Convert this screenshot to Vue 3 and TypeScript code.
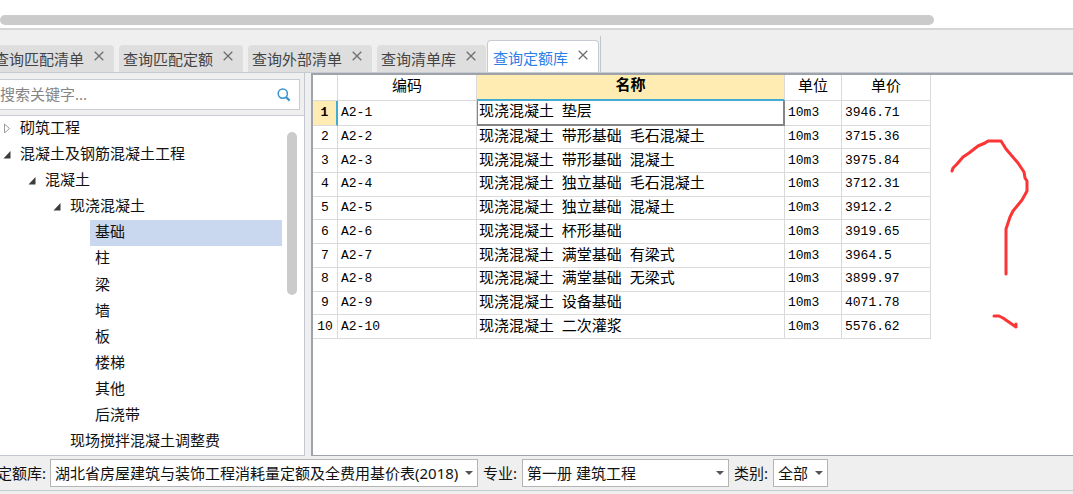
<script setup lang="ts">
import { ref } from 'vue'

interface Tab { id: string; label: string }
interface TreeNode { label: string; level: number; state: 'open' | 'closed' | 'leaf' }
interface Row { code: string; name: string; unit: string; price: string }

const tabs: Tab[] = [
  { id: 'matchList', label: '查询匹配清单' },
  { id: 'matchQuota', label: '查询匹配定额' },
  { id: 'external', label: '查询外部清单' },
  { id: 'listLib', label: '查询清单库' },
  { id: 'quotaLib', label: '查询定额库' },
]
const activeTab = ref('quotaLib')

const nodes: TreeNode[] = [
  { label: '砌筑工程', level: 0, state: 'closed' },
  { label: '混凝土及钢筋混凝土工程', level: 0, state: 'open' },
  { label: '混凝土', level: 1, state: 'open' },
  { label: '现浇混凝土', level: 2, state: 'open' },
  { label: '基础', level: 3, state: 'leaf' },
  { label: '柱', level: 3, state: 'leaf' },
  { label: '梁', level: 3, state: 'leaf' },
  { label: '墙', level: 3, state: 'leaf' },
  { label: '板', level: 3, state: 'leaf' },
  { label: '楼梯', level: 3, state: 'leaf' },
  { label: '其他', level: 3, state: 'leaf' },
  { label: '后浇带', level: 3, state: 'leaf' },
  { label: '现场搅拌混凝土调整费', level: 2, state: 'leaf' },
]
const selectedNode = ref('基础')

const rows: Row[] = [
  { code: 'A2-1', name: '现浇混凝土 垫层', unit: '10m3', price: '3946.71' },
  { code: 'A2-2', name: '现浇混凝土 带形基础 毛石混凝土', unit: '10m3', price: '3715.36' },
  { code: 'A2-3', name: '现浇混凝土 带形基础 混凝土', unit: '10m3', price: '3975.84' },
  { code: 'A2-4', name: '现浇混凝土 独立基础 毛石混凝土', unit: '10m3', price: '3712.31' },
  { code: 'A2-5', name: '现浇混凝土 独立基础 混凝土', unit: '10m3', price: '3912.2' },
  { code: 'A2-6', name: '现浇混凝土 杯形基础', unit: '10m3', price: '3919.65' },
  { code: 'A2-7', name: '现浇混凝土 满堂基础 有梁式', unit: '10m3', price: '3964.5' },
  { code: 'A2-8', name: '现浇混凝土 满堂基础 无梁式', unit: '10m3', price: '3899.97' },
  { code: 'A2-9', name: '现浇混凝土 设备基础', unit: '10m3', price: '4071.78' },
  { code: 'A2-10', name: '现浇混凝土 二次灌浆', unit: '10m3', price: '5576.62' },
]
const selectedRow = ref(0)
const keyword = ref('')
</script>

<template>
  <div class="app">
    <div class="upper"><div class="hbar"></div></div>

    <nav class="tabs">
      <div v-for="t in tabs" :key="t.id" class="tab" :class="{ active: t.id === activeTab }">
        <button class="tab-label" type="button" @click="activeTab = t.id">{{ t.label }}</button>
        <button class="tab-close" type="button" :aria-label="'关闭' + t.label">
          <svg viewBox="0 0 10 10"><path d="M0.7 0.7L9.3 9.3M9.3 0.7L0.7 9.3" /></svg>
        </button>
      </div>
      <div class="tab-end"></div>
    </nav>

    <main class="main">
      <aside class="sidebar">
        <div class="search">
          <input v-model="keyword" type="text" aria-label="搜索关键字" placeholder="搜索关键字..." />
          <button type="button" aria-label="搜索">
            <svg viewBox="0 0 14 14"><circle cx="5.8" cy="5.6" r="4.6" /><path class="handle" d="M9.2 9.2L12.6 12.6" /></svg>
          </button>
        </div>
        <div class="tree">
          <ul>
            <li v-for="n in nodes" :key="n.label" :class="'level-' + n.level">
              <svg v-if="n.state === 'closed'" class="arrow" viewBox="0 0 8 10"><path class="hollow" d="M1.5 1L6.5 5.5L1.5 10Z" /></svg>
              <svg v-else-if="n.state === 'open'" class="arrow" viewBox="0 0 8 10"><path class="solid" d="M7.5 2V9.5H0.5Z" /></svg>
              <span v-else class="arrow"></span>
              <button type="button" :class="{ selected: n.label === selectedNode }" @click="selectedNode = n.label">{{ n.label }}</button>
            </li>
          </ul>
          <div class="vbar"></div>
        </div>
      </aside>

      <section class="panel">
        <table>
          <colgroup>
            <col class="c-num" /><col class="c-code" /><col class="c-name" /><col class="c-unit" /><col class="c-price" />
          </colgroup>
          <thead>
            <tr><th></th><th>编码</th><th class="current">名称</th><th>单位</th><th>单价</th></tr>
          </thead>
          <tbody>
            <tr v-for="(r, i) in rows" :key="r.code" :class="{ chosen: i === selectedRow }" @click="selectedRow = i">
              <th scope="row">{{ i + 1 }}</th>
              <td>{{ r.code }}</td>
              <td class="name"><template v-for="(w, k) in r.name.split(' ')" :key="k">{{ k ? ' ' : '' }}<span>{{ w }}</span></template></td>
              <td>{{ r.unit }}</td>
              <td>{{ r.price }}</td>
            </tr>
          </tbody>
        </table>
        <svg class="scribble" viewBox="945 135 90 200" aria-hidden="true">
          <path d="M952 171L953 168L957 164L963 157L969 153L978 146L985 143L988 141H1001L1006 149L1018 163L1024 172L1025 178L1027 181V191L1022 200L1013 211L1010 217L1008 223L1006 229V274" />
          <path d="M994 316H999L1003 318L1016 327V324" />
        </svg>
      </section>
    </main>

    <footer class="filters">
      <label for="lib">定额库:</label>
      <div class="pick lib"><select id="lib"><option>湖北省房屋建筑与装饰工程消耗量定额及全费用基价表(2018)</option></select></div>
      <label for="major">专业:</label>
      <div class="pick major"><select id="major"><option>第一册 建筑工程</option></select></div>
      <label for="kind">类别:</label>
      <div class="pick kind"><select id="kind"><option>全部</option></select></div>
    </footer>
  </div>
</template>

<style>
body { margin: 0; background: #efefef; }
</style>

<style scoped>
.app {
  display: flex;
  flex-direction: column;
  min-height: 100vh;
  overflow: hidden;
  background: #efefef;
  color: #111;
  font: 15px/20px "Noto Sans", "Noto Sans CJK SC", sans-serif;
}
.app *, .app *::after { box-sizing: border-box; }
button, input, select { font: inherit; color: inherit; }
button { padding: 0; border: 0; background: none; white-space: nowrap; }
svg { display: block; fill: none; }

.upper { height: 30px; padding-top: 15px; background: #fff; border-bottom: 2px solid #d6d6d6; }
.hbar { width: 87%; height: 10px; border-radius: 5px; background: #cbcbcb; }

.tabs {
  display: flex;
  align-items: flex-end;
  gap: 5px;
  height: 43px;
  margin-left: -10px;
  border-bottom: 1px solid #c6cad2;
}
.tab {
  display: flex;
  flex: none;
  gap: 10px;
  height: 27px;
  padding: 4px 10px 0 4px;
  border-radius: 4px 4px 0 0;
  background: #dedede;
  color: #444;
}
.tab-label { height: 20px; }
.tab-close { width: 10px; height: 10px; margin-top: 2px; }
.tab-close svg { width: 10px; height: 10px; stroke: #6e6e6e; stroke-width: 1.3; }
.tab.active {
  height: 32px;
  margin-left: -4px;
  padding: 7px 10px 0 5px;
  border: 1px solid #c6cad2;
  border-bottom: 0;
  background: #fff;
}
.tab.active .tab-label { color: #2a80e8; }
.tab-end { width: 1px; height: 36px; margin-left: -4px; background: #c0c4cc; }

.main { display: flex; flex: 1; gap: 6px; }
.sidebar {
  display: flex;
  flex: none;
  flex-direction: column;
  width: 305px;
  border-right: 1px solid #c3c7cf;
  border-bottom: 1px solid #c3c7cf;
}
.search {
  display: flex;
  align-items: center;
  height: 31px;
  margin: 6px 4px 5px 0;
  padding-right: 8px;
  border: 1px solid #c8ccd3;
  border-left: 0;
  background: #fff;
}
.search input { flex: 1; min-width: 0; padding: 0 0 2px; border: 0; outline: 0; background: none; }
.search input::placeholder { color: #858585; opacity: 1; }
.search svg { width: 14px; height: 14px; stroke: #3a93cf; stroke-width: 1.5; }
.search .handle { stroke-width: 2.2; }

.tree { display: flex; flex: 1; gap: 5px; padding-right: 7px; border-top: 1px solid #c8ccd3; background: #fff; }
.tree ul { display: flex; flex: 1; flex-direction: column; margin: 0; padding: 0; list-style: none; }
.tree li { display: flex; flex: 1; align-items: stretch; }
.arrow { flex: none; width: 8px; height: 10px; margin: 7px 4px 0 3px; }
.hollow { stroke: #9a9a9a; }
.solid { fill: #3c3c3c; }
.level-1 { padding-left: 25px; }
.level-2 { padding-left: 50px; }
.level-3 { padding-left: 75px; }
.tree li button { flex: 1; padding: 0 0 4px 5px; text-align: left; }
.tree li button.selected { background: #c9d8ef; }
.vbar { width: 10px; height: 48%; margin-top: 16px; border-radius: 5px; background: #cbcbcb; }

.panel {
  position: relative;
  flex: 1;
  border: solid #9ea3aa;
  border-width: 2px 0 1px 2px;
  background: #fff;
}
table {
  width: 618px;
  height: 264px;
  table-layout: fixed;
  border-collapse: separate;
  border-spacing: 0;
  color: #000;
  font: 13px/20px "Liberation Mono", "Noto Sans CJK SC", monospace;
}
.c-num { width: 25px; }
.c-code { width: 139px; }
.c-name { width: 308px; }
.c-unit { width: 57px; }
.c-price { width: 89px; }
th, td { padding: 0 0 0 3px; border: solid #dadada; border-width: 0 1px 1px 0; white-space: nowrap; }
td { text-align: left; }
th { padding: 0; font-weight: 400; text-align: center; }
thead th { height: 26px; font-size: 15px; }
thead th.current { border-bottom: 2px solid #43acd2; background: #ffecb3; font-weight: 700; }
td.name { padding: 2px 0 0 2px; }
.name span { font-size: 15px; }
.chosen th { border-right: 2px solid #43acd2; background: #ffecb3; font-weight: 700; }
.chosen td.name { padding: 2px 0 0 1px; border: solid #858585; border-width: 0 2px 2px 1px; }

.scribble { position: absolute; top: 60px; left: 632px; width: 90px; height: 200px; }
.scribble path { stroke: #fb3535; stroke-width: 3; stroke-linecap: round; stroke-linejoin: round; }

.filters {
  display: flex;
  align-items: center;
  height: 35px;
  margin: 0 0 3px -3px;
  border-bottom: 1px solid #c6cad2;
}
.filters label { flex: none; width: 39px; white-space: nowrap; }
.filters label:first-child { width: 53px; }
.pick { position: relative; height: 28px; margin-right: 5px; }
.pick select {
  width: 100%;
  height: 100%;
  padding: 0 16px 0 4px;
  border: 1px solid #b4b4b4;
  border-radius: 0;
  outline: 0;
  background: #fff;
  appearance: none;
}
.pick::after {
  content: "";
  position: absolute;
  top: 12px;
  right: 5px;
  border: solid transparent;
  border-width: 4px 4px 0;
  border-top-color: #555;
  pointer-events: none;
}
.lib { width: 428px; }
.major { width: 207px; }
.kind { width: 55px; }
</style>
